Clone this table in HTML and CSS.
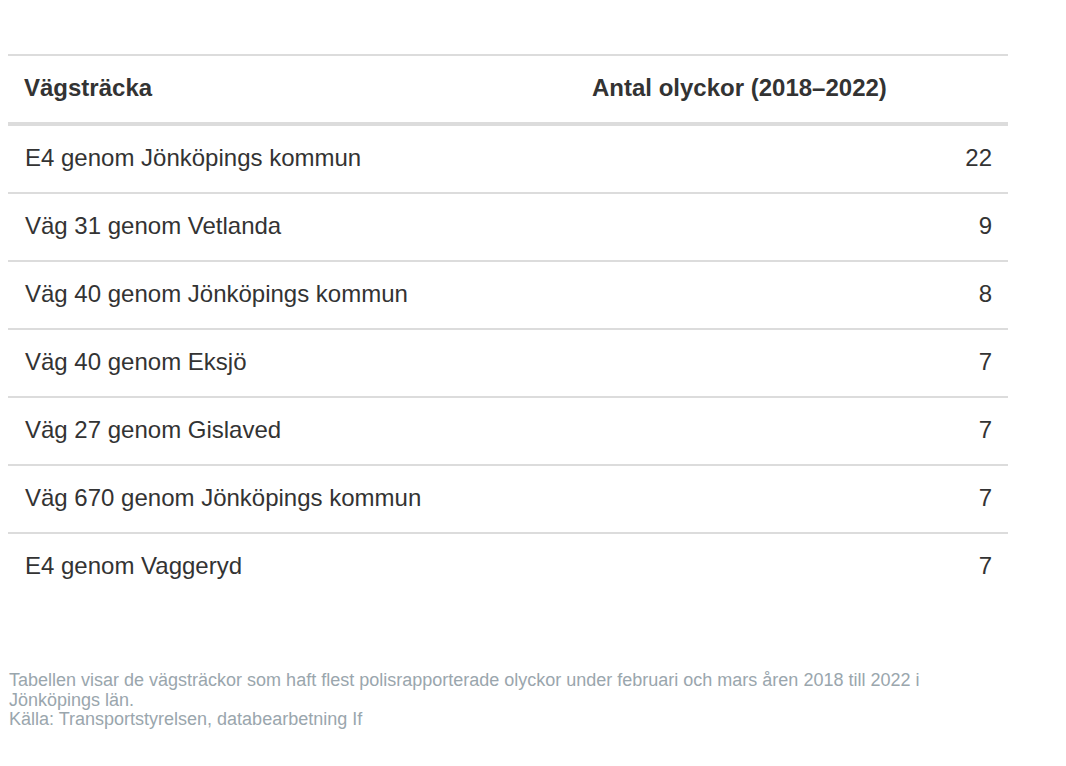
FILE: index.html
```html
<!DOCTYPE html>
<html lang="sv">
<head>
<meta charset="utf-8">
<title>Vägsträckor</title>
<link rel="stylesheet" href="styles.css">
</head>
<body>
<div class="wrap">
  <table class="data">
    <thead>
      <tr>
        <th class="col-road">Vägsträcka</th>
        <th class="col-num">Antal olyckor (2018–2022)</th>
      </tr>
    </thead>
    <tbody>
      <tr><td>E4 genom Jönköpings kommun</td><td class="num">22</td></tr>
      <tr><td>Väg 31 genom Vetlanda</td><td class="num">9</td></tr>
      <tr><td>Väg 40 genom Jönköpings kommun</td><td class="num">8</td></tr>
      <tr><td>Väg 40 genom Eksjö</td><td class="num">7</td></tr>
      <tr><td>Väg 27 genom Gislaved</td><td class="num">7</td></tr>
      <tr><td>Väg 670 genom Jönköpings kommun</td><td class="num">7</td></tr>
      <tr><td>E4 genom Vaggeryd</td><td class="num">7</td></tr>
    </tbody>
  </table>
  <p class="note">Tabellen visar de vägsträckor som haft flest polisrapporterade olyckor under februari och mars åren 2018 till 2022 i Jönköpings län.<br>Källa: Transportstyrelsen, databearbetning If</p>
</div>
</body>
</html>
```
FILE: styles.css
```css
html, body {
  margin: 0;
  padding: 0;
  background: #fff;
}
body {
  font-family: "Liberation Sans", Arial, sans-serif;
  color: #333;
}
.wrap {
  padding: 54px 8px 0 8px;
  width: 1000px;
}
.data {
  width: 1000px;
  border-collapse: collapse;
  font-size: 24px;
  line-height: 28px;
}
.data th {
  font-weight: bold;
  text-align: left;
  padding: 18px 16px 20px 16px;
  height: 28px;
  border-top: 2px solid #dcdcdc;
  border-bottom: 4px solid #dcdcdc;
}
.col-road { width: 536px; }
.data td {
  padding: 18px 16px 20px 17px;
  height: 28px;
  border-bottom: 2px solid #dcdcdc;
}
.data tbody tr:last-child td {
  border-bottom: none;
}
.data td.num {
  text-align: right;
  padding-right: 16px;
}
.note {
  margin: 71px 0 0 1px;
  width: 930px;
  font-size: 18px;
  line-height: 19.5px;
  color: #9aa6ad;
}
```
